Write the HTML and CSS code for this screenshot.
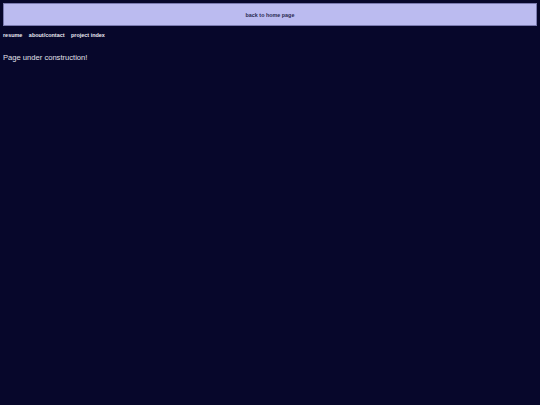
FILE: index.html
```html
<!DOCTYPE html>
<html>
<head>
<meta charset="utf-8">
<link rel="stylesheet" href="styles.css">
</head>
<body>
<div class="banner"><a href="#">back to home page</a></div>
<nav class="nav"><a href="#">resume</a><a href="#">about/contact</a><a href="#">project index</a></nav>
<p class="msg">Page under construction!</p>
</body>
</html>
```
FILE: styles.css
```css
html, body { margin: 0; padding: 0; }
body {
  background: #07072b;
  font-family: "Liberation Sans", Arial, sans-serif;
  padding: 3px;
  min-height: 405px;
  box-sizing: border-box;
}
.banner {
  background: #bbbbf0;
  border: 1px solid #7a7ab0;
  height: 21px;
  display: flex;
  align-items: center;
  justify-content: center;
}
.banner a {
  color: #2a2a50;
  font-size: 5.4px;
  font-weight: bold;
  text-decoration: none;
}
.nav {
  display: flex;
  gap: 6.5px;
  margin-top: 6px;
}
.nav a {
  color: #e8e8f0;
  font-size: 5.45px;
  font-weight: bold;
  text-decoration: none;
}
.msg {
  color: #e0e0ea;
  font-size: 7.6px;
  margin: 15px 0 0;
}
```
